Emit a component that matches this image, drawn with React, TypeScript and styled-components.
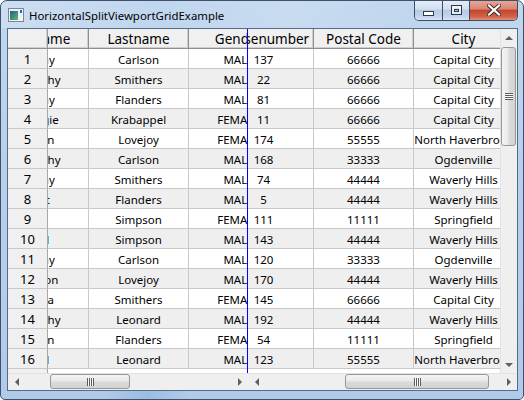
import React from 'react';
import styled, { createGlobalStyle, css } from 'styled-components';

const GlobalStyle = createGlobalStyle`
  html, body { margin: 0; padding: 0; background: #fff; }
  body { font-family: "Noto Sans", "Segoe UI", sans-serif; }
  #root { width: 524px; height: 400px; }
`;

type Person = {
    first: string;
    last: string;
    gender: string;
    house: number;
    postal: string;
    city: string;
};

const people: Person[] = [
    {first: 'Lenny', last: 'Carlson', gender: 'MALE', house: 137, postal: '66666', city: 'Capital City'},
    {first: 'Timothy', last: 'Smithers', gender: 'MALE', house: 22, postal: '66666', city: 'Capital City'},
    {first: 'Lenny', last: 'Flanders', gender: 'MALE', house: 81, postal: '66666', city: 'Capital City'},
    {first: 'Maggie', last: 'Krabappel', gender: 'FEMALE', house: 11, postal: '66666', city: 'Capital City'},
    {first: 'Helen', last: 'Lovejoy', gender: 'FEMALE', house: 174, postal: '55555', city: 'North Haverbrook'},
    {first: 'Timothy', last: 'Carlson', gender: 'MALE', house: 168, postal: '33333', city: 'Ogdenville'},
    {first: 'Lenny', last: 'Smithers', gender: 'MALE', house: 74, postal: '44444', city: 'Waverly Hills'},
    {first: 'Bart', last: 'Flanders', gender: 'MALE', house: 5, postal: '44444', city: 'Waverly Hills'},
    {first: 'Joe', last: 'Simpson', gender: 'FEMALE', house: 111, postal: '11111', city: 'Springfield'},
    {first: 'Carl', last: 'Simpson', gender: 'MALE', house: 143, postal: '44444', city: 'Waverly Hills'},
    {first: 'Lenny', last: 'Carlson', gender: 'MALE', house: 120, postal: '33333', city: 'Ogdenville'},
    {first: 'Waylon', last: 'Lovejoy', gender: 'MALE', house: 170, postal: '44444', city: 'Waverly Hills'},
    {first: 'Maria', last: 'Smithers', gender: 'FEMALE', house: 145, postal: '66666', city: 'Capital City'},
    {first: 'Timothy', last: 'Leonard', gender: 'MALE', house: 192, postal: '44444', city: 'Waverly Hills'},
    {first: 'Helen', last: 'Flanders', gender: 'FEMALE', house: 54, postal: '11111', city: 'Springfield'},
    {first: 'Carl', last: 'Leonard', gender: 'MALE', house: 123, postal: '55555', city: 'North Haverbrook'},
];

const columns: { key: keyof Person; title: string }[] = [
    {key: 'first', title: 'Firstname'},
    {key: 'last', title: 'Lastname'},
    {key: 'gender', title: 'Gender'},
    {key: 'house', title: 'Housenumber'},
    {key: 'postal', title: 'Postal Code'},
    {key: 'city', title: 'City'},
];

/* ---------- window chrome ---------- */

const Window = styled.div`
  width: 524px;
  height: 400px;
  box-sizing: border-box;
  border: 1px solid #3f516a;
  border-radius: 7px 7px 5px 5px;
  background: linear-gradient(to bottom, #c1d7ef 0%, #b7d0ec 40%, #b0cbe9 100%);
  display: flex;
  flex-direction: column;
  overflow: hidden;
`;

const TitleBar = styled.div`
  height: 27px;
  flex: none;
  display: flex;
  align-items: flex-start;
  padding-left: 7px;
  background: linear-gradient(100deg, rgba(255,255,255,0.18) 0%, rgba(255,255,255,0) 30%, rgba(255,255,255,0.12) 55%, rgba(255,255,255,0) 80%);
`;

const Title = styled.span`
  margin-left: 5px;
  margin-top: 7px;
  font-size: 11.4px;
  color: #000;
  white-space: nowrap;
`;

const IconBox = styled.svg`
  margin-top: 7px;
  flex: none;
`;

const Captions = styled.div`
  margin-left: auto;
  margin-right: 5px;
  margin-top: -1px;
  flex: none;
  display: flex;
  height: 20px;
  border: 1px solid #3b4c64;
  border-top: none;
  border-radius: 0 0 5px 5px;
  overflow: hidden;
`;

const CaptionButton = styled.div<{ $close?: boolean }>`
  width: ${p => (p.$close ? 47 : 26)}px;
  flex: none;
  display: flex;
  align-items: center;
  justify-content: center;
  border-left: 1px solid #3b4c64;
  &:first-child { border-left: none; width: 27px; }
  ${p => p.$close
        ? css`background: linear-gradient(to bottom, #e9a99b 0%, #d98672 45%, #c4452f 52%, #d0644b 85%, #e2957c 100%);`
        : css`background: linear-gradient(to bottom, #e6eef8 0%, #d3e0f0 45%, #b6cbe4 52%, #c3d6ec 85%, #d8e6f5 100%);`}
`;

const Body = styled.div`
  flex: 1;
  display: flex;
`;

const SideFrame = styled.div<{ $w: number }>`
  width: ${p => p.$w}px;
  flex: none;
`;

const ClientFrame = styled.div`
  width: 511px;
  height: 363px;
  flex: none;
  box-sizing: border-box;
  border: 1px solid #566b86;
  background: #fff;
  display: flex;
`;

const BottomFrame = styled.div`
  height: 8px;
  flex: none;
  background: linear-gradient(90deg, rgba(255,255,255,0) 20%, rgba(120,160,210,0.35) 28%, rgba(255,255,255,0) 36%);
`;

/* ---------- grid ---------- */

const Pane = styled.div<{ $w: number }>`
  width: ${p => p.$w}px;
  flex: none;
  display: flex;
  flex-direction: column;
`;

const TableArea = styled.div`
  height: 344px;
  flex: none;
  display: flex;
`;

const RowHeaderColumn = styled.div`
  width: 40px;
  flex: none;
  display: flex;
  flex-direction: column;
  background: #f0f0f0;
`;

const Corner = styled.div`
  height: 20px;
  flex: none;
  box-sizing: border-box;
  background: #f0f0f0;
  border-right: 1px solid #9a9a9a;
  border-bottom: 1px solid #8e8e8e;
  box-shadow: inset -1px -1px 0 #d0d0d0;
`;

const RowNumber = styled.div`
  height: 20px;
  flex: none;
  box-sizing: border-box;
  border-right: 1px solid #a8a8a8;
  border-bottom: 1px solid #c9c9c9;
  display: flex;
  align-items: center;
  justify-content: center;
  font-size: 13px;
  color: #000;
`;

const RowHeaderRest = styled.div`
  flex: 1;
  border-right: 1px solid #a8a8a8;
`;

const Viewport = styled.div<{ $split?: boolean }>`
  flex: 1;
  overflow: hidden;
  ${p => p.$split && css`border-right: 1px solid #0000ff;`}
`;

const Table = styled.div<{ $offset: number }>`
  width: 600px;
  margin-left: -${p => p.$offset}px;
  display: flex;
  flex-direction: column;
`;

const HeaderRow = styled.div`
  display: flex;
  height: 20px;
`;

const HeaderCell = styled.div`
  width: 100px;
  flex: none;
  box-sizing: border-box;
  background: #f0f0f0;
  border-right: 1px solid #8e8e8e;
  border-bottom: 1px solid #8e8e8e;
  box-shadow: inset -1px -1px 0 #d0d0d0;
  display: flex;
  align-items: center;
  justify-content: center;
  overflow: hidden;
  white-space: nowrap;
  font-size: 13.5px;
  color: #000;
`;

const DataRow = styled.div<{ $alt?: boolean }>`
  display: flex;
  height: 20px;
  background: ${p => (p.$alt ? '#efefef' : '#fff')};
`;

const PartialRow = styled.div`
  display: flex;
  flex: 1;
  background: #fff;
`;

const Cell = styled.div`
  width: 100px;
  flex: none;
  box-sizing: border-box;
  border-right: 1px solid #c9c9c9;
  border-bottom: 1px solid #c9c9c9;
  display: flex;
  align-items: center;
  justify-content: center;
  overflow: hidden;
  white-space: nowrap;
  font-size: 11.5px;
  color: #000;
`;

const EmptyCell = styled.div`
  width: 100px;
  flex: none;
  box-sizing: border-box;
  border-right: 1px solid #c9c9c9;
`;

const CellText = styled.span`
  flex: none;
  padding-top: 1px;
`;

/* ---------- scrollbars ---------- */

const ScrollBar = styled.div<{ $vertical?: boolean }>`
  display: flex;
  flex: none;
  background: #efefef;
  ${p => p.$vertical
        ? css`flex-direction: column; width: 17px; height: 100%;
               box-shadow: inset 1px 0 0 #e2e2e2;`
        : css`flex-direction: row; height: 17px;
               box-shadow: inset 0 1px 0 #e2e2e2;`}
`;

const ArrowButton = styled.div`
  width: 17px;
  height: 17px;
  flex: none;
  display: flex;
  align-items: center;
  justify-content: center;
`;

const Arrow = styled.div<{ $dir: 'left' | 'right' | 'up' | 'down' }>`
  width: 0;
  height: 0;
  ${p => p.$dir === 'left' && css`border-right: 4px solid #606060; border-top: 4px solid transparent; border-bottom: 4px solid transparent;`}
  ${p => p.$dir === 'right' && css`border-left: 4px solid #606060; border-top: 4px solid transparent; border-bottom: 4px solid transparent;`}
  ${p => p.$dir === 'up' && css`border-bottom: 4px solid #606060; border-left: 4px solid transparent; border-right: 4px solid transparent;`}
  ${p => p.$dir === 'down' && css`border-top: 4px solid #606060; border-left: 4px solid transparent; border-right: 4px solid transparent;`}
`;

const Track = styled.div<{ $vertical?: boolean }>`
  flex: 1;
  display: flex;
  flex-direction: ${p => (p.$vertical ? 'column' : 'row')};
`;

const Thumb = styled.div<{ $vertical?: boolean; $start: number; $size: number }>`
  box-sizing: border-box;
  flex: none;
  border: 1px solid #979797;
  border-radius: 3px;
  display: flex;
  align-items: center;
  justify-content: center;
  ${p => p.$vertical
        ? css`margin: ${p.$start}px 0 0 1px; width: 15px; height: ${p.$size}px;
               background: linear-gradient(to right, #f4f4f4 0%, #e9e9e9 45%, #dadada 55%, #d3d3d3 100%);`
        : css`margin: 1px 0 0 ${p.$start}px; height: 15px; width: ${p.$size}px;
               background: linear-gradient(to bottom, #f4f4f4 0%, #e9e9e9 45%, #dadada 55%, #d3d3d3 100%);`}
`;

const Grip = styled.div<{ $vertical?: boolean }>`
  ${p => p.$vertical
        ? css`width: 8px; height: 7px;
               background: repeating-linear-gradient(to bottom, #5e5e5e 0 1px, #fafafa 1px 2px);`
        : css`width: 7px; height: 8px;
               background: repeating-linear-gradient(to right, #5e5e5e 0 1px, #fafafa 1px 2px);`}
`;

function HScroll({start, size}: { start: number; size: number }) {
    return <ScrollBar>
        <ArrowButton><Arrow $dir="left"/></ArrowButton>
        <Track>
            <Thumb $start={start} $size={size}><Grip/></Thumb>
        </Track>
        <ArrowButton><Arrow $dir="right"/></ArrowButton>
    </ScrollBar>;
}

function VScroll({start, size}: { start: number; size: number }) {
    return <ScrollBar $vertical>
        <ArrowButton><Arrow $dir="up"/></ArrowButton>
        <Track $vertical>
            <Thumb $vertical $start={start} $size={size}><Grip $vertical/></Thumb>
        </Track>
        <ArrowButton><Arrow $dir="down"/></ArrowButton>
    </ScrollBar>;
}

/* ---------- table ---------- */

function GridTable({offset}: { offset: number }) {
    return <Table $offset={offset}>
        <HeaderRow>
            {columns.map(c => <HeaderCell key={c.key}><CellText>{c.title}</CellText></HeaderCell>)}
        </HeaderRow>
        {people.map((p, i) => (
            <DataRow key={i} $alt={i % 2 === 1}>
                {columns.map(c => <Cell key={c.key}><CellText>{String(p[c.key])}</CellText></Cell>)}
            </DataRow>
        ))}
        <PartialRow>
            {columns.map(c => <EmptyCell key={c.key}/>)}
        </PartialRow>
    </Table>;
}

function AppIcon() {
    return <IconBox width="16" height="15" viewBox="0 0 16 15">
        <defs>
            <linearGradient id="ic" x1="0" y1="0" x2="1" y2="1">
                <stop offset="0" stopColor="#1f5f86"/>
                <stop offset="1" stopColor="#63b86a"/>
            </linearGradient>
        </defs>
        <rect x="0.5" y="0.5" width="15" height="13" fill="#eef2f6" stroke="#7c8793"/>
        <rect x="2" y="3" width="8" height="9" fill="url(#ic)"/>
        <rect x="12" y="2" width="2" height="3" fill="#2b63c9"/>
    </IconBox>;
}

export default function App() {
    return <>
        <GlobalStyle/>
        <Window>
            <TitleBar>
                <AppIcon/>
                <Title>HorizontalSplitViewportGridExample</Title>
                <Captions>
                    <CaptionButton>
                        <svg width="11" height="14" viewBox="0 0 11 14">
                            <rect x="0.5" y="8.5" width="10" height="4" fill="#fff" stroke="#2d3a4c"/>
                        </svg>
                    </CaptionButton>
                    <CaptionButton>
                        <svg width="11" height="11" viewBox="0 0 11 11">
                            <rect x="0.5" y="0.5" width="10" height="9" fill="none" stroke="#2d3a4c"/>
                            <rect x="2" y="2" width="7" height="6" fill="none" stroke="#fff" strokeWidth="1.2"/>
                            <rect x="3.5" y="4.5" width="4" height="2" fill="none" stroke="#2d3a4c"/>
                        </svg>
                    </CaptionButton>
                    <CaptionButton $close>
                        <svg width="14" height="12" viewBox="0 0 14 12">
                            <path d="M2 1.5 L12 10.5 M12 1.5 L2 10.5" stroke="#3a2a2a" strokeWidth="4" strokeLinecap="square"/>
                            <path d="M2 1.5 L12 10.5 M12 1.5 L2 10.5" stroke="#fff" strokeWidth="2.2" strokeLinecap="square"/>
                        </svg>
                    </CaptionButton>
                </Captions>
            </TitleBar>
            <Body>
                <SideFrame $w={6}/>
                <ClientFrame>
                    <Pane $w={240}>
                        <TableArea>
                            <RowHeaderColumn>
                                <Corner/>
                                {people.map((_, i) => <RowNumber key={i}>{i + 1}</RowNumber>)}
                                <RowHeaderRest/>
                            </RowHeaderColumn>
                            <Viewport $split>
                                <GridTable offset={59}/>
                            </Viewport>
                        </TableArea>
                        <HScroll start={25} size={80}/>
                    </Pane>
                    <Pane $w={269}>
                        <TableArea>
                            <Viewport>
                                <GridTable offset={334}/>
                            </Viewport>
                            <VScroll start={1} size={99}/>
                        </TableArea>
                        <HScroll start={80} size={144}/>
                    </Pane>
                </ClientFrame>
                <SideFrame $w={5}/>
            </Body>
            <BottomFrame/>
        </Window>
    </>;
}
